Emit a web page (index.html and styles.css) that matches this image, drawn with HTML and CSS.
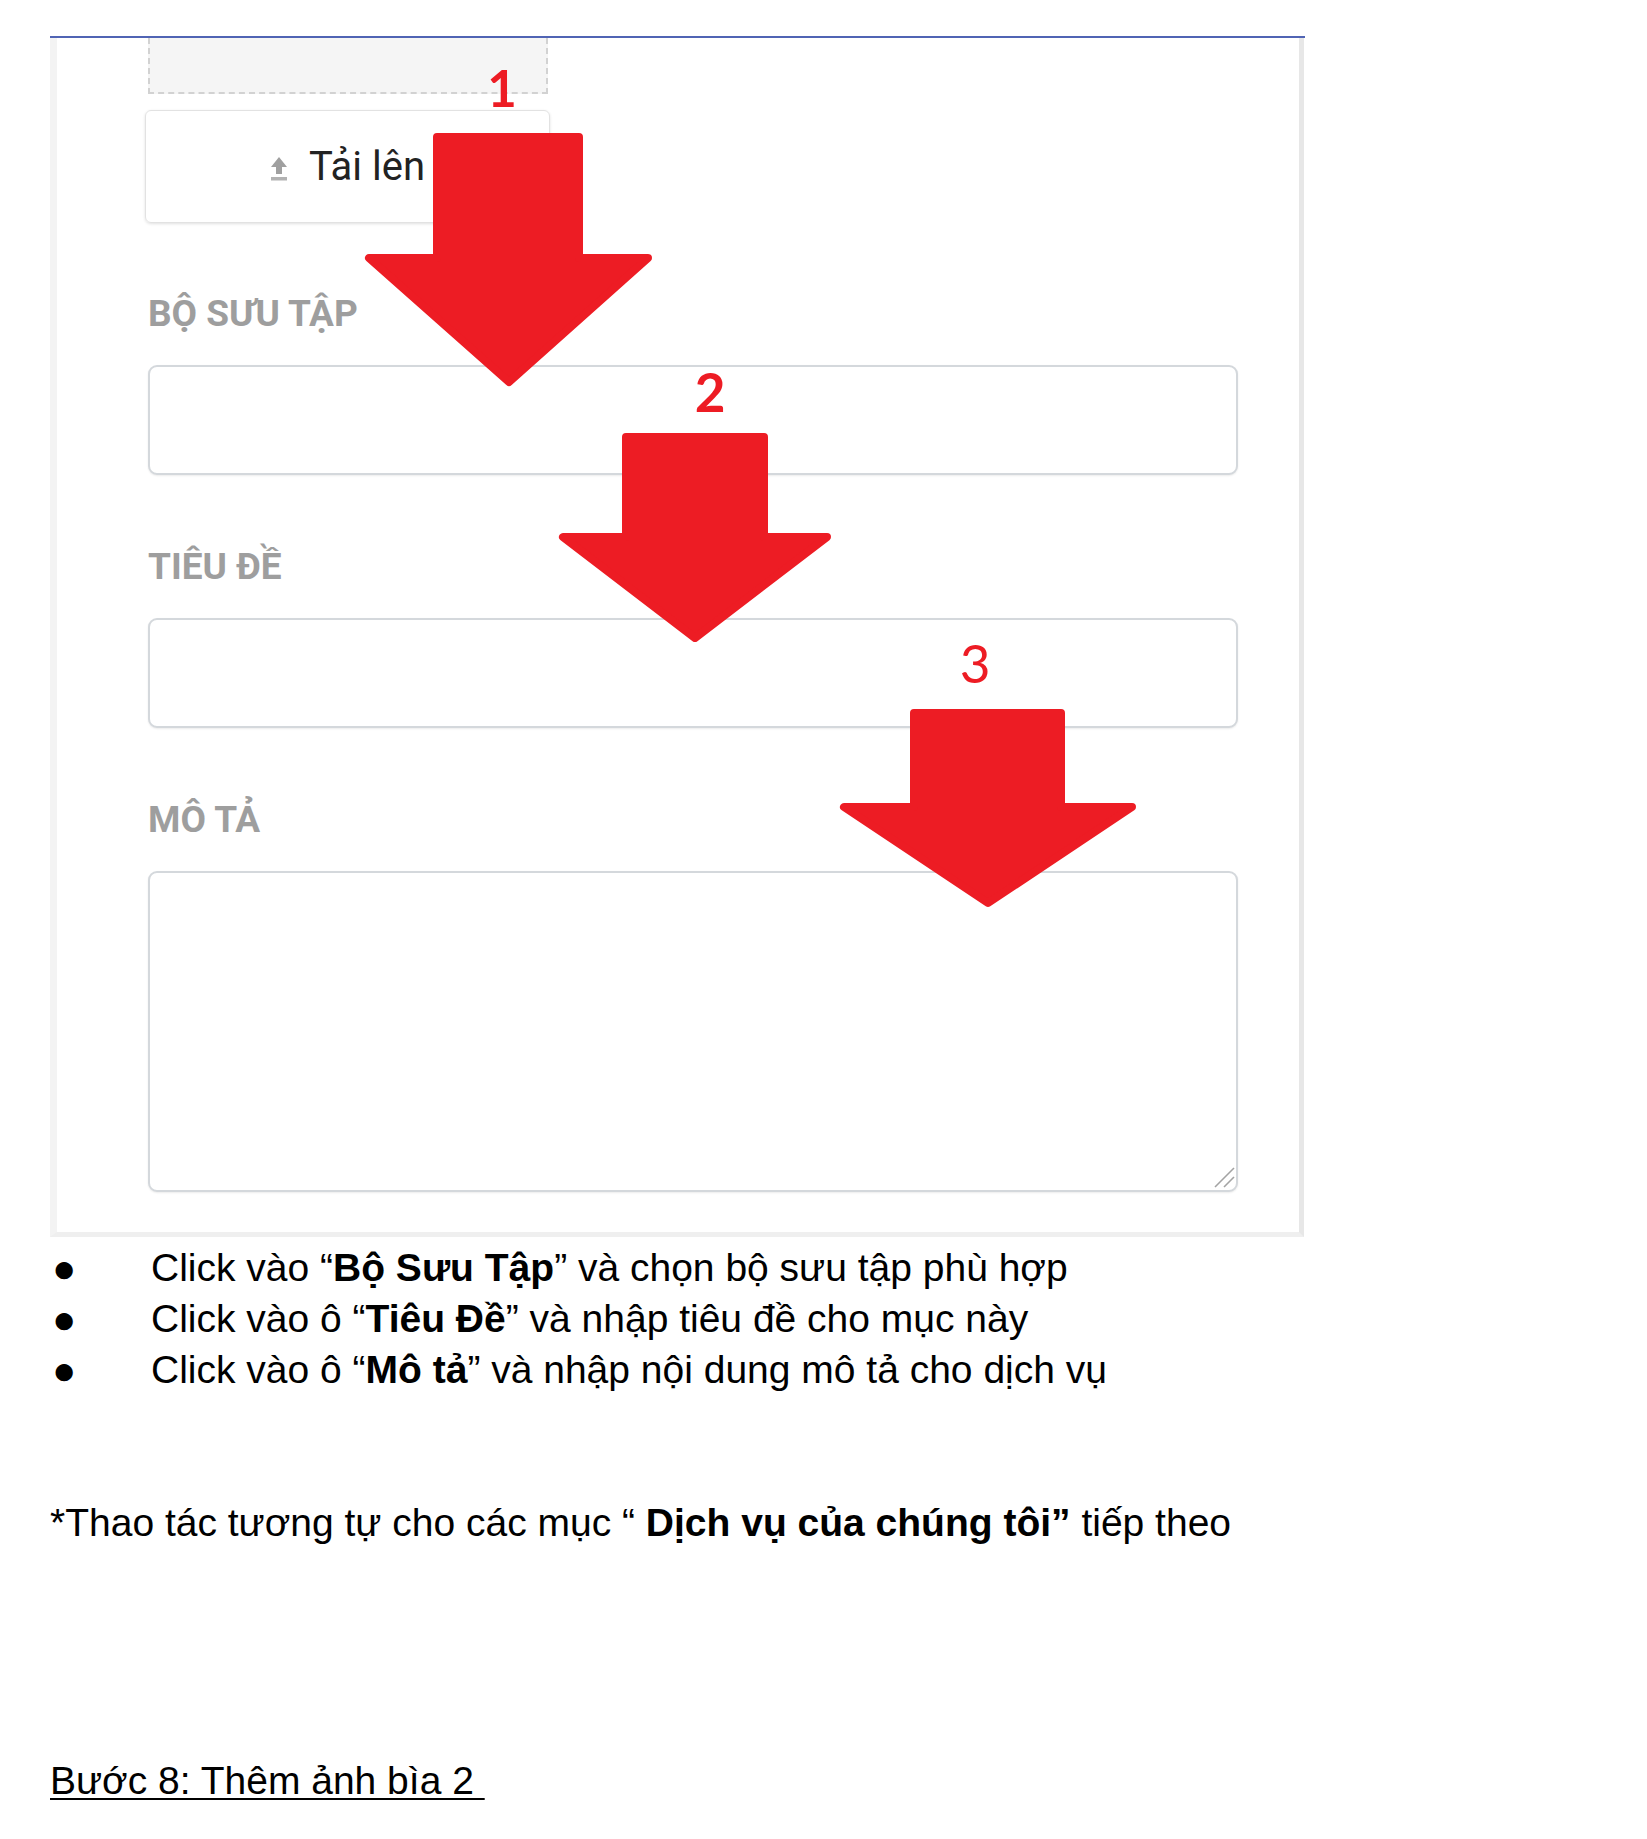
FILE: index.html
```html
<!DOCTYPE html>
<html lang="vi">
<head>
<meta charset="utf-8">
<title>Hướng dẫn</title>
<link rel="stylesheet" href="styles.css">
</head>
<body>
<div class="doc">
  <div class="shot">
    <div class="frame">
      <div class="dropzone"></div>
      <div class="upload">
        <svg class="upload-icon" width="18" height="24" viewBox="0 0 18 24" aria-hidden="true">
          <polygon points="9,0 17,10 12,10 12,17 6,17 6,10 1,10" fill="#a0a0a0"/>
          <rect x="1" y="20" width="16" height="3.5" fill="#b2b2b2"/>
        </svg>
        <span class="upload-text">Tải lên</span>
      </div>
      <div class="field">
        <div class="label">BỘ SƯU TẬP</div>
        <input class="input" type="text">
      </div>
      <div class="field">
        <div class="label">TIÊU ĐỀ</div>
        <input class="input" type="text">
      </div>
      <div class="field">
        <div class="label">MÔ TẢ</div>
        <div class="ta-wrap">
          <textarea class="textarea"></textarea>
          <svg class="grip" width="24" height="24" viewBox="0 0 24 24" aria-hidden="true">
            <line x1="3" y1="21" x2="22" y2="2" stroke="#a3a3a3" stroke-width="1.6"/>
            <line x1="12" y1="21" x2="22" y2="11" stroke="#a3a3a3" stroke-width="1.6"/>
          </svg>
        </div>
      </div>
    </div>
  </div>

  <svg class="arrows" width="1647" height="1240" viewBox="0 0 1647 1240" aria-hidden="true">
    <g fill="#ed1c24" stroke="#ed1c24" stroke-width="8" stroke-linejoin="round">
      <polygon points="437,137 579,137 579,258 648,258 509,382 369,258 437,258"/>
      <polygon points="626,437 764,437 764,537 827,537 695,638 563,537 626,537"/>
      <polygon points="914,713 1061,713 1061,807 1132,807 988,903 844,807 914,807"/>
    </g>
  </svg>
  <span class="num num-1">1</span>
  <span class="num num-2">2</span>
  <span class="num num-3">3</span>

  <div class="notes">
    <ul class="bullets">
      <li>Click vào “<b>Bộ Sưu Tập</b>” và chọn bộ sưu tập phù hợp</li>
      <li>Click vào ô “<b>Tiêu Đề</b>” và nhập tiêu đề cho mục này</li>
      <li>Click vào ô “<b>Mô tả</b>” và nhập nội dung mô tả cho dịch vụ</li>
    </ul>
    <p class="para">*Thao tác tương tự cho các mục “ <b>Dịch vụ của chúng tôi”</b> tiếp theo</p>
    <p class="step"><span class="step-text">Bước 8: Thêm ảnh bìa 2&nbsp;</span></p>
  </div>
</div>
</body>
</html>
```

FILE: styles.css
```css
html, body {
  margin: 0;
  padding: 0;
  background: #ffffff;
}

.doc {
  position: relative;
  padding: 36px 0 60px 50px;
  font-family: "Liberation Sans", Arial, sans-serif;
  color: #000;
}

.shot {
  width: 1255px;
  border-top: 2px solid #5064b4;
}

.frame {
  width: 1254px;
  box-sizing: border-box;
  border-left: 7px solid #f3f3f3;
  border-right: 5px solid #e7e7e7;
  border-bottom: 5px solid #efefef;
  padding: 0 61px 40px 91px;
  background: #fff;
}

.dropzone {
  width: 400px;
  height: 56px;
  box-sizing: border-box;
  background: #f5f5f5;
  border: 2px dashed #d2d2d2;
  border-top: none;
}

.upload {
  margin: 16px 0 0 -3px;
  width: 405px;
  height: 113px;
  box-sizing: border-box;
  border: 1px solid #e2e2e2;
  border-radius: 6px;
  box-shadow: 0 1px 3px rgba(0, 0, 0, 0.12);
  display: flex;
  align-items: center;
  justify-content: center;
  gap: 21px;
}

.upload-icon {
  display: block;
  margin-top: 5px;
}

.upload-text {
  font-family: Roboto, "Noto Sans", sans-serif;
  font-size: 40px;
  color: #222;
  line-height: 1;
}

.field {
  display: flex;
  flex-direction: column;
}

.label {
  margin-top: 72px;
  margin-bottom: 33px;
  font-family: Roboto, "Noto Sans", sans-serif;
  font-weight: 700;
  font-size: 37px;
  line-height: 37px;
  color: #9e9e9e;
}

.field + .field .label {
  margin-top: 73px;
}

.input,
.textarea {
  display: block;
  margin: 0;
  width: 1090px;
  box-sizing: border-box;
  border: 2px solid #d4d8dc;
  border-radius: 9px;
  background: #fff;
  box-shadow: 0 1px 2px rgba(0, 0, 0, 0.08);
  font: 30px Roboto, sans-serif;
  padding: 10px 16px;
  outline: none;
}

.input {
  height: 110px;
}

.ta-wrap {
  position: relative;
  width: 1090px;
}

.textarea {
  height: 321px;
  resize: none;
}

.grip {
  position: absolute;
  right: 2px;
  bottom: 2px;
}

.arrows {
  position: absolute;
  left: 0;
  top: 0;
  pointer-events: none;
}

.num {
  position: absolute;
  width: 60px;
  text-align: center;
  font-family: Lato, "Open Sans", sans-serif;
  font-size: 53px;
  line-height: 53px;
  color: #ed1c24;
}

.num-1 { left: 472px; top: 61px; font-weight: 700; font-size: 51px; }
.num-2 { left: 680px; top: 365px; font-weight: 700; }
.num-3 { left: 945px; top: 636px; font-weight: 400; }

.notes {
  font-size: 39px;
  line-height: 51px;
}

.bullets {
  list-style: none;
  margin: 5px 0 0 0;
  padding: 0;
}

.bullets li {
  position: relative;
  padding-left: 101px;
}

.bullets li::before {
  content: "●";
  position: absolute;
  left: 2px;
  top: 1px;
  font-size: 40px;
  line-height: 51px;
}

.para {
  margin: 102px 0 0 0;
}

.step {
  margin: 207px 0 0 0;
}

.step-text {
  text-decoration: underline;
  text-decoration-thickness: 2px;
  text-underline-offset: 4px;
}
```
